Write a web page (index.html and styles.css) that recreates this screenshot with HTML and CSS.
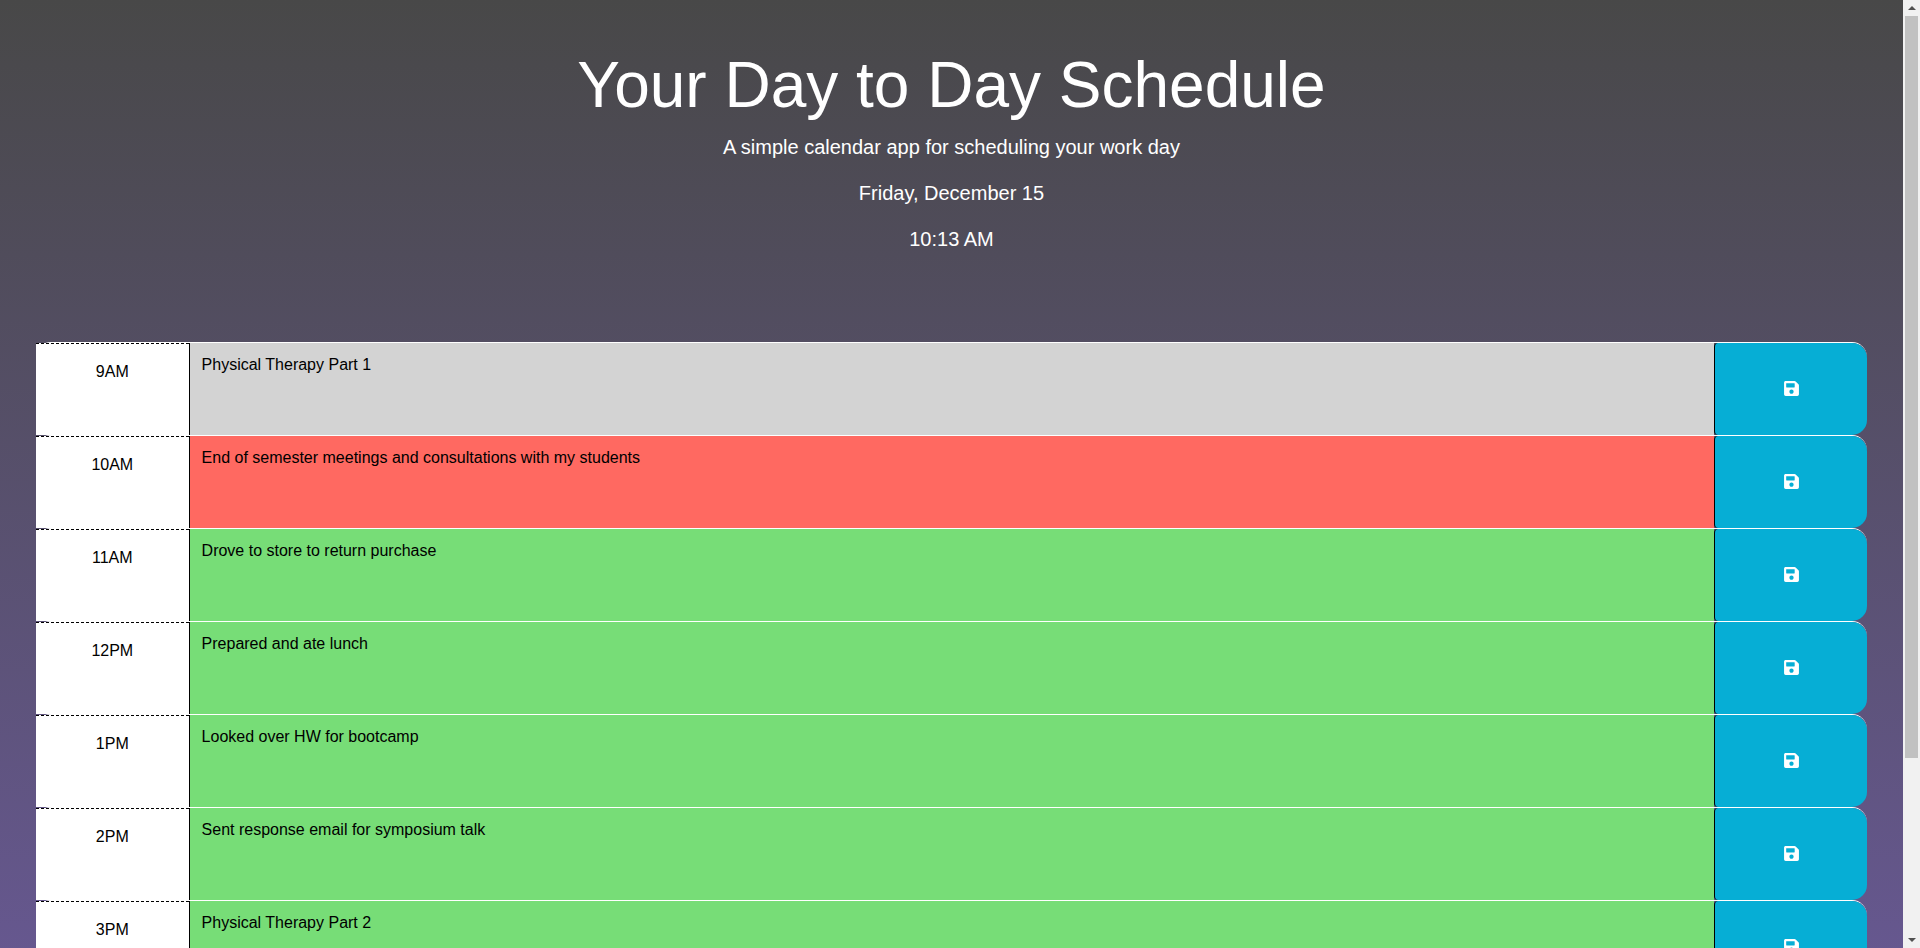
FILE: index.html
```html
<!DOCTYPE html>
<html lang="en">
<head>
    <meta charset="UTF-8">
    <meta name="viewport" content="width=device-width, initial-scale=1.0">
    <title>Your Day to Day Schedule</title>
    <link rel="stylesheet" href="styles.css">
</head>
<body>
    <svg class="icon-defs" aria-hidden="true">
        <symbol id="save" viewBox="0 0 448 512">
            <path d="M433.941 129.941l-83.882-83.882A48 48 0 0 0 316.118 32H48C21.49 32 0 53.49 0 80v352c0 26.51 21.49 48 48 48h352c26.51 0 48-21.49 48-48V163.882a48 48 0 0 0-14.059-33.941zM224 416c-35.346 0-64-28.654-64-64 0-35.346 28.654-64 64-64s64 28.654 64 64c0 35.346-28.654 64-64 64zm96-304.52V212c0 6.627-5.373 12-12 12H76c-6.627 0-12-5.373-12-12V108c0-6.627 5.373-12 12-12h228.52c3.183 0 6.235 1.264 8.485 3.515l3.48 3.48A11.996 11.996 0 0 1 320 111.48z"/>
        </symbol>
    </svg>

    <header class="banner">
        <h1>Your Day to Day Schedule</h1>
        <p>A simple calendar app for scheduling your work day</p>
        <p>Friday, December 15</p>
        <p>10:13 AM</p>
    </header>

    <main class="schedule">
        <div class="time-block">
            <div class="hour">9AM</div>
            <textarea class="description past">Physical Therapy Part 1</textarea>
            <button class="save-btn" type="button" aria-label="Save"><svg class="save-icon"><use href="#save"></use></svg></button>
        </div>
        <div class="time-block">
            <div class="hour">10AM</div>
            <textarea class="description present">End of semester meetings and consultations with my students</textarea>
            <button class="save-btn" type="button" aria-label="Save"><svg class="save-icon"><use href="#save"></use></svg></button>
        </div>
        <div class="time-block">
            <div class="hour">11AM</div>
            <textarea class="description future">Drove to store to return purchase</textarea>
            <button class="save-btn" type="button" aria-label="Save"><svg class="save-icon"><use href="#save"></use></svg></button>
        </div>
        <div class="time-block">
            <div class="hour">12PM</div>
            <textarea class="description future">Prepared and ate lunch</textarea>
            <button class="save-btn" type="button" aria-label="Save"><svg class="save-icon"><use href="#save"></use></svg></button>
        </div>
        <div class="time-block">
            <div class="hour">1PM</div>
            <textarea class="description future">Looked over HW for bootcamp</textarea>
            <button class="save-btn" type="button" aria-label="Save"><svg class="save-icon"><use href="#save"></use></svg></button>
        </div>
        <div class="time-block">
            <div class="hour">2PM</div>
            <textarea class="description future">Sent response email for symposium talk</textarea>
            <button class="save-btn" type="button" aria-label="Save"><svg class="save-icon"><use href="#save"></use></svg></button>
        </div>
        <div class="time-block">
            <div class="hour">3PM</div>
            <textarea class="description future">Physical Therapy Part 2</textarea>
            <button class="save-btn" type="button" aria-label="Save"><svg class="save-icon"><use href="#save"></use></svg></button>
        </div>
        <div class="time-block">
            <div class="hour">4PM</div>
            <textarea class="description future"></textarea>
            <button class="save-btn" type="button" aria-label="Save"><svg class="save-icon"><use href="#save"></use></svg></button>
        </div>
        <div class="time-block">
            <div class="hour">5PM</div>
            <textarea class="description future"></textarea>
            <button class="save-btn" type="button" aria-label="Save"><svg class="save-icon"><use href="#save"></use></svg></button>
        </div>
    </main>

    <!-- browser scrollbar, the headless window does not draw one -->
    <div class="scrollbar" aria-hidden="true">
        <span class="arrow-up"></span>
        <span class="thumb"></span>
        <span class="arrow-down"></span>
    </div>
</body>
</html>
```

FILE: styles.css
```css
body {
    margin: 0;
    padding-right: 17px;
    font-family: "Liberation Sans", Arial, sans-serif;
    font-size: 16px;
    line-height: 24px;
    color: #000;
    background: linear-gradient(to bottom, #484848, #6d5ba0);
}
.icon-defs {
    display: none;
}
.banner {
    padding: 47px 0 72px;
    text-align: center;
    color: #fff;
}
.banner h1 {
    margin: 0 0 8px;
    font-size: 64px;
    font-weight: 400;
    line-height: 77px;
}
.banner p {
    margin: 0 0 16px;
    font-size: 20px;
    line-height: 30px;
}
.schedule {
    padding: 0 36px;
}
.time-block {
    display: grid;
    grid-template-columns: 1fr 10fr 1fr;
    height: 93px;
    box-sizing: border-box;
    border-top: 1px solid #fff;
    border-radius: 15px;
}
.hour {
    padding-top: 16px;
    text-align: center;
    background: #fff;
    border-top: 1px dashed #000;
}
.description {
    display: block;
    width: 100%;
    height: 100%;
    box-sizing: border-box;
    margin: 0;
    padding: 13px 12px;
    border: none;
    border-left: 1px solid #000;
    border-radius: 0;
    outline: none;
    resize: none;
    font-family: inherit;
    font-size: 16px;
    color: #000;
}
.past {
    background: #d3d3d3;
}
.present {
    background: #ff6961;
}
.future {
    background: #77dd77;
}
.save-btn {
    display: flex;
    align-items: center;
    justify-content: center;
    padding: 0 0 2px;
    border: none;
    border-left: 1px solid #000;
    border-radius: 4px 15px 15px 4px;
    background: #06aed5;
    cursor: pointer;
}
.save-icon {
    width: 15px;
    height: 17px;
    fill: #fff;
}
.scrollbar {
    position: fixed;
    top: 0;
    right: 0;
    bottom: 0;
    display: flex;
    flex-direction: column;
    align-items: center;
    width: 17px;
    background: #f1f1f1;
}
.arrow-up,
.arrow-down {
    width: 0;
    height: 0;
    border-left: 4px solid transparent;
    border-right: 4px solid transparent;
}
.arrow-up {
    margin-top: 6px;
    border-bottom: 4px solid #505050;
}
.thumb {
    width: 13px;
    height: 742px;
    margin-top: 6px;
    background: #c1c1c1;
}
.arrow-down {
    margin-top: auto;
    margin-bottom: 6px;
    border-top: 4px solid #505050;
}
```
